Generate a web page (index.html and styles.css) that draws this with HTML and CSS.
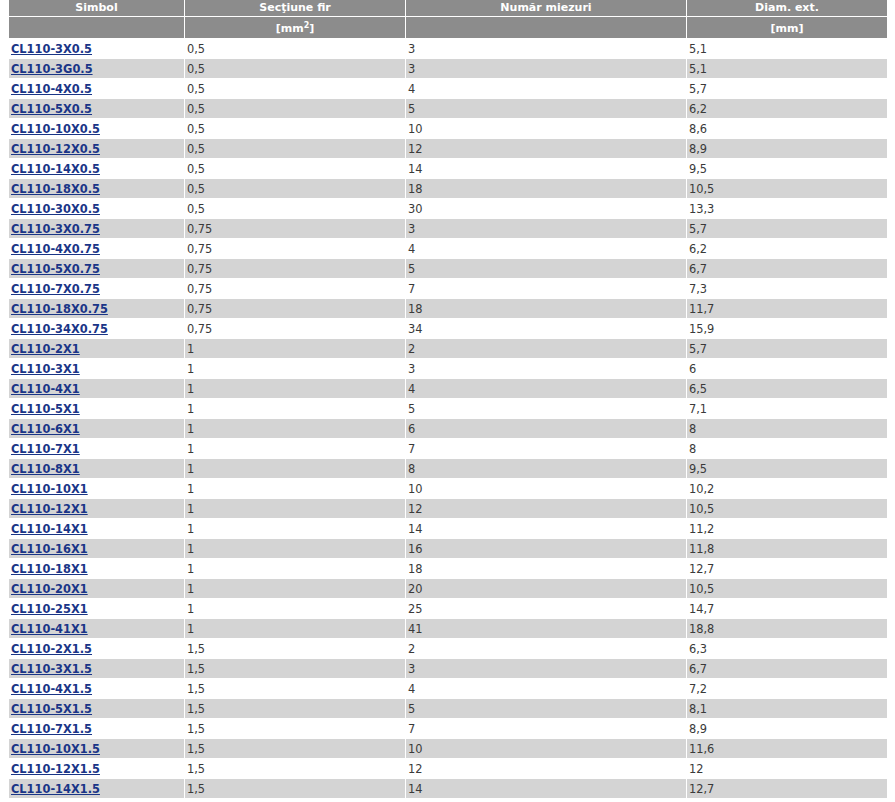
FILE: index.html
```html
<!DOCTYPE html>
<html>
<head>
<meta charset="utf-8">
<link rel="stylesheet" href="styles.css">
</head>
<body>
<table class="spec">
<colgroup><col class="c1"><col class="c2"><col class="c3"><col class="c4"></colgroup>
<thead>
<tr class="h1"><th>Simbol</th><th>Secţiune fir</th><th>Număr miezuri</th><th>Diam. ext.</th></tr>
<tr class="h2"><th></th><th>[mm<sup>2</sup>]</th><th></th><th>[mm]</th></tr>
</thead>
<tbody>
<tr><td><a href="#">CL110-3X0.5</a></td><td>0,5</td><td>3</td><td>5,1</td></tr>
<tr><td><a href="#">CL110-3G0.5</a></td><td>0,5</td><td>3</td><td>5,1</td></tr>
<tr><td><a href="#">CL110-4X0.5</a></td><td>0,5</td><td>4</td><td>5,7</td></tr>
<tr><td><a href="#">CL110-5X0.5</a></td><td>0,5</td><td>5</td><td>6,2</td></tr>
<tr><td><a href="#">CL110-10X0.5</a></td><td>0,5</td><td>10</td><td>8,6</td></tr>
<tr><td><a href="#">CL110-12X0.5</a></td><td>0,5</td><td>12</td><td>8,9</td></tr>
<tr><td><a href="#">CL110-14X0.5</a></td><td>0,5</td><td>14</td><td>9,5</td></tr>
<tr><td><a href="#">CL110-18X0.5</a></td><td>0,5</td><td>18</td><td>10,5</td></tr>
<tr><td><a href="#">CL110-30X0.5</a></td><td>0,5</td><td>30</td><td>13,3</td></tr>
<tr><td><a href="#">CL110-3X0.75</a></td><td>0,75</td><td>3</td><td>5,7</td></tr>
<tr><td><a href="#">CL110-4X0.75</a></td><td>0,75</td><td>4</td><td>6,2</td></tr>
<tr><td><a href="#">CL110-5X0.75</a></td><td>0,75</td><td>5</td><td>6,7</td></tr>
<tr><td><a href="#">CL110-7X0.75</a></td><td>0,75</td><td>7</td><td>7,3</td></tr>
<tr><td><a href="#">CL110-18X0.75</a></td><td>0,75</td><td>18</td><td>11,7</td></tr>
<tr><td><a href="#">CL110-34X0.75</a></td><td>0,75</td><td>34</td><td>15,9</td></tr>
<tr><td><a href="#">CL110-2X1</a></td><td>1</td><td>2</td><td>5,7</td></tr>
<tr><td><a href="#">CL110-3X1</a></td><td>1</td><td>3</td><td>6</td></tr>
<tr><td><a href="#">CL110-4X1</a></td><td>1</td><td>4</td><td>6,5</td></tr>
<tr><td><a href="#">CL110-5X1</a></td><td>1</td><td>5</td><td>7,1</td></tr>
<tr><td><a href="#">CL110-6X1</a></td><td>1</td><td>6</td><td>8</td></tr>
<tr><td><a href="#">CL110-7X1</a></td><td>1</td><td>7</td><td>8</td></tr>
<tr><td><a href="#">CL110-8X1</a></td><td>1</td><td>8</td><td>9,5</td></tr>
<tr><td><a href="#">CL110-10X1</a></td><td>1</td><td>10</td><td>10,2</td></tr>
<tr><td><a href="#">CL110-12X1</a></td><td>1</td><td>12</td><td>10,5</td></tr>
<tr><td><a href="#">CL110-14X1</a></td><td>1</td><td>14</td><td>11,2</td></tr>
<tr><td><a href="#">CL110-16X1</a></td><td>1</td><td>16</td><td>11,8</td></tr>
<tr><td><a href="#">CL110-18X1</a></td><td>1</td><td>18</td><td>12,7</td></tr>
<tr><td><a href="#">CL110-20X1</a></td><td>1</td><td>20</td><td>10,5</td></tr>
<tr><td><a href="#">CL110-25X1</a></td><td>1</td><td>25</td><td>14,7</td></tr>
<tr><td><a href="#">CL110-41X1</a></td><td>1</td><td>41</td><td>18,8</td></tr>
<tr><td><a href="#">CL110-2X1.5</a></td><td>1,5</td><td>2</td><td>6,3</td></tr>
<tr><td><a href="#">CL110-3X1.5</a></td><td>1,5</td><td>3</td><td>6,7</td></tr>
<tr><td><a href="#">CL110-4X1.5</a></td><td>1,5</td><td>4</td><td>7,2</td></tr>
<tr><td><a href="#">CL110-5X1.5</a></td><td>1,5</td><td>5</td><td>8,1</td></tr>
<tr><td><a href="#">CL110-7X1.5</a></td><td>1,5</td><td>7</td><td>8,9</td></tr>
<tr><td><a href="#">CL110-10X1.5</a></td><td>1,5</td><td>10</td><td>11,6</td></tr>
<tr><td><a href="#">CL110-12X1.5</a></td><td>1,5</td><td>12</td><td>12</td></tr>
<tr><td><a href="#">CL110-14X1.5</a></td><td>1,5</td><td>14</td><td>12,7</td></tr>
</tbody>
</table>
</body>
</html>
```
FILE: styles.css
```css
html, body {
  background: #ffffff;
}
body {
  margin: 0 8px;
  font-family: "DejaVu Sans", Verdana, sans-serif;
  font-size: 11.4px;
  color: #3a3a3a;
}
.spec {
  width: 879px;
  table-layout: fixed;
  border-collapse: separate;
  border-spacing: 1px;
  margin-top: -1px;
}
.c1 { width: 175px; }
.c2 { width: 220px; }
.c3 { width: 280px; }
.c4 { width: 200px; }
.spec th {
  background: #8c8c8c;
  color: #ffffff;
  font-weight: bold;
  font-size: 11px;
  text-align: center;
  padding: 0 2px;
  line-height: 14px;
}
.spec .h1 th { height: 16px; }
.spec .h2 th { height: 19px; padding-top: 2px; }
.spec sup {
  font-size: 8px;
  line-height: 0;
  vertical-align: 4px;
}
.spec td {
  height: 18px;
  padding: 1px 2px 0;
  line-height: 14px;
  vertical-align: middle;
  text-align: left;
}
.spec tbody tr:nth-child(even) td {
  background: #d4d4d4;
}
.spec a {
  color: #1a3587;
  font-weight: bold;
  text-decoration: underline;
}
```
